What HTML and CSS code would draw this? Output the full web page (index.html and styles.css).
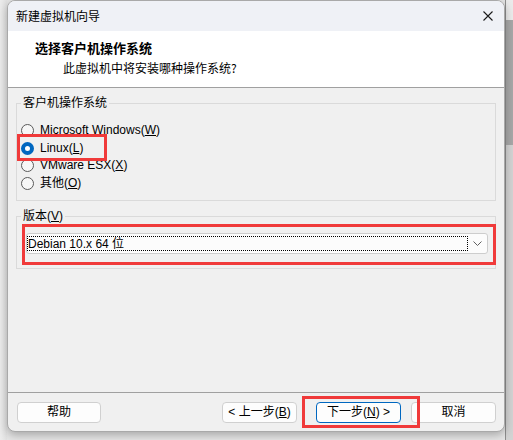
FILE: index.html
```html
<!DOCTYPE html>
<html lang="zh-CN">
<head>
<meta charset="utf-8">
<title>新建虚拟机向导</title>
<link rel="stylesheet" href="styles.css">
</head>
<body>
<div class="desk">
  <div class="gutter"></div>
  <div class="window">
    <div class="titlebar">
      <span class="title">新建虚拟机向导</span>
      <svg class="close" width="10" height="10" viewBox="0 0 10 10"><path d="M0.5 0.5L9.5 9.5M9.5 0.5L0.5 9.5" stroke="#1a1a1a" stroke-width="1.1" fill="none"/></svg>
    </div>
    <div class="header">
      <div class="h-title">选择客户机操作系统</div>
      <div class="h-sub">此虚拟机中将安装哪种操作系统?</div>
    </div>
    <div class="content">
      <fieldset class="group g-os">
        <legend>客户机操作系统</legend>
        <div class="radio"><span class="dot"></span><span>Microsoft Windows(<u>W</u>)</span></div>
        <div class="radio"><span class="dot on"></span><span>Linux(<u>L</u>)</span></div>
        <div class="radio"><span class="dot"></span><span>VMware ESX(<u>X</u>)</span></div>
        <div class="radio"><span class="dot"></span><span>其他(<u>O</u>)</span></div>
      </fieldset>
      <fieldset class="group g-ver">
        <legend>版本(<u>V</u>)</legend>
        <div class="combo">
          <div class="combo-val">Debian 10.x 64 位</div>
          <div class="combo-btn"><svg width="9" height="5" viewBox="0 0 9 5"><path d="M0.5 0.5L4.5 4.5L8.5 0.5" stroke="#606060" stroke-width="1" fill="none"/></svg></div>
        </div>
      </fieldset>
    </div>
    <div class="footer">
      <button class="btn b-help">帮助</button>
      <div class="spacer"></div>
      <button class="btn b-back">&lt; 上一步(<u>B</u>)</button>
      <button class="btn b-next">下一步(<u>N</u>) &gt;</button>
      <button class="btn b-cancel">取消</button>
    </div>
    <div class="mark m1"></div>
    <div class="mark m2"></div>
    <div class="mark m3"></div>
  </div>
  <div class="side">
    <div class="side-a"></div>
    <div class="side-b"></div>
    <div class="side-c"></div>
  </div>
</div>
</body>
</html>
```
FILE: styles.css
```css
* { box-sizing: border-box; }
html, body { margin: 0; padding: 0; }
body {
  width: 513px;
  height: 440px;
  overflow: hidden;
  background: #e6e6e6;
  font-family: "Liberation Sans", "Noto Sans CJK SC", sans-serif;
  font-size: 12px;
  color: #000;
}
.desk {
  display: flex;
  height: 440px;
}
.gutter {
  width: 7px;
  flex: none;
  background: linear-gradient(to right, #ececec, #e2e2e2);
}
.window {
  position: relative;
  width: 498px;
  height: 432px;
  flex: none;
  display: flex;
  flex-direction: column;
  border: 1px solid #a9a9a9;
  border-radius: 8px;
  background: #f0f0f0;
  box-shadow: 0 3px 10px rgba(0,0,0,0.28);
  overflow: hidden;
  z-index: 1;
}
.titlebar {
  height: 30px;
  flex: none;
  background: #eff1f6;
  display: flex;
  align-items: center;
  justify-content: space-between;
  padding: 0 11px 0 8px;
}
.title {
  font-family: "Noto Sans CJK SC", sans-serif;
  font-size: 12px;
  line-height: 16px;
}
.close { display: block; }
.header {
  height: 57px;
  flex: none;
  background: #fff;
  border-bottom: 1px solid #a0a0a0;
  padding: 8px 0 0 27px;
}
.h-title {
  font-family: "Noto Sans CJK SC", sans-serif;
  font-weight: bold;
  font-size: 13px;
  line-height: 18px;
}
.h-sub {
  font-family: "Noto Sans CJK SC", sans-serif;
  font-size: 12px;
  line-height: 18px;
  margin: 2px 0 0 28px;
}
.content {
  flex: 1;
  padding: 7px 8px 0 8px;
}
.group {
  margin: 0;
  border: 1px solid #dadada;
  padding: 11px 4px 8px 4px;
  min-width: 0;
}
.group legend {
  padding: 0 2px;
  margin-left: 0;
  line-height: 16px;
  font-size: 12px;
}
.radio {
  display: flex;
  align-items: center;
  height: 17.5px;
  line-height: 17.5px;
}
.dot {
  width: 13px;
  height: 13px;
  border-radius: 50%;
  border: 1px solid #5a5a5a;
  background: #f7f7f7;
  margin-right: 6px;
  flex: none;
}
.dot.on {
  border: 4px solid #0067c0;
  background: #fff;
}
.g-ver {
  margin-top: 7px;
  padding: 9px 7px 14px 9px;
}
.g-ver legend { margin-left: -5px; }
.combo {
  height: 21px;
  border: 1px solid #cdcdcd;
  border-radius: 3px;
  background: #fcfcfc;
  display: flex;
  padding: 2px 0 2px 0;
}
.combo-val {
  flex: 1;
  border: 1px dotted #000;
  line-height: 15px;
  padding-left: 0;
  white-space: nowrap;
}
.combo-btn {
  width: 19px;
  flex: none;
  display: flex;
  align-items: center;
  justify-content: center;
}
.combo-btn svg { display: block; }
.footer {
  height: 39px;
  flex: none;
  border-top: 1px solid #a0a0a0;
  display: flex;
  align-items: center;
  padding: 0 8px 0 9px;
}
.spacer { flex: 1; }
.btn {
  height: 21px;
  padding: 0;
  border: 1px solid #d0d0d0;
  border-radius: 4px;
  background: #fdfdfd;
  font-family: "Liberation Sans", "Noto Sans CJK SC", sans-serif;
  font-size: 12px;
  line-height: 17px;
  color: #000;
}
.b-help { width: 84px; }
.b-back { width: 75px; }
.b-next { width: 85px; margin-left: 19px; border-color: #0067c0; }
.b-cancel { width: 85px; margin-left: 10px; }
.mark {
  position: absolute;
  border: 3px solid #f03a3a;
  pointer-events: none;
}
.m1 { left: 9px; top: 133px; width: 90px; height: 27px; }
.m2 { left: 14px; top: 223px; width: 474px; height: 41px; }
.m3 { left: 294px; top: 395px; width: 118px; height: 32px; }
.side {
  width: 8px;
  flex: none;
  display: flex;
  flex-direction: column;
  border-left: 1px solid #8e8e8e;
}
.side-a { height: 20px; background: #ebebeb; }
.side-b { height: 125px; background: #a7a7a7; }
.side-c { flex: 1; background: #d3d3d3; }
```
